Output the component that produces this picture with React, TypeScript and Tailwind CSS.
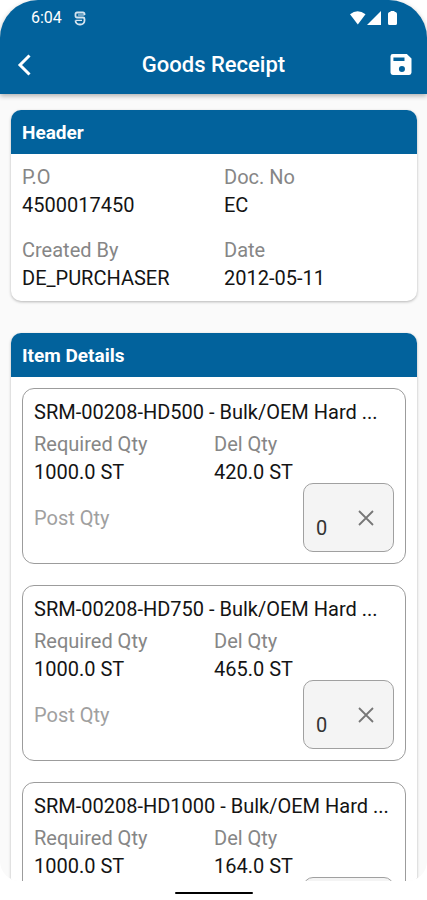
import React, { useState } from "react";

type FieldProps = { label: string; value: string };

function Field({ label, value }: FieldProps) {
  return (
    <div className="flex flex-col gap-1.5">
      <dt className="text-[#868686]">{label}</dt>
      <dd className="text-[#141414]">{value}</dd>
    </div>
  );
}

type CardProps = { title: string; className: string; children: React.ReactNode };

function Card({ title, className, children }: CardProps) {
  return (
    <section className="overflow-hidden rounded-[10px] bg-white shadow-[0_1px_3px_rgba(0,0,0,0.28)]">
      <h2 className="bg-[#02629c] px-[11px] pt-3 pb-2.5 text-[19px] font-bold text-white">{title}</h2>
      <div className={className}>{children}</div>
    </section>
  );
}

type Item = { id: string; title: string; required: string; delivered: string };

const items: Item[] = [
  { id: "hd500", title: "SRM-00208-HD500 - Bulk/OEM Hard ...", required: "1000.0 ST", delivered: "420.0 ST" },
  { id: "hd750", title: "SRM-00208-HD750 - Bulk/OEM Hard ...", required: "1000.0 ST", delivered: "465.0 ST" },
  { id: "hd1000", title: "SRM-00208-HD1000 - Bulk/OEM Hard ...", required: "1000.0 ST", delivered: "164.0 ST" },
];

function ItemCard({ item }: { item: Item }) {
  const [qty, setQty] = useState("0");
  return (
    <li className="rounded-xl border border-[#9c9c9c] px-[11px] pt-3 pb-[11px]">
      <h3 className="truncate text-[#141414]">{item.title}</h3>
      <dl className="mt-2.5 grid grid-cols-2">
        <Field label="Required Qty" value={item.required} />
        <Field label="Del Qty" value={item.delivered} />
      </dl>
      <div className="flex items-center justify-between">
        <label htmlFor={item.id} className="text-[#a0a0a0]">
          Post Qty
        </label>
        <div className="flex h-[69px] w-[91px] rounded-[10px] border border-[#a0a0a0] bg-[#f4f4f4]">
          <input
            id={item.id}
            inputMode="numeric"
            value={qty}
            onChange={(e) => setQty(e.target.value)}
            className="w-12 bg-transparent pt-5 pl-3 text-[#333333] outline-none"
          />
          <button type="button" aria-label="Clear" onClick={() => setQty("")} className="flex items-center">
            <svg viewBox="0 0 28 28" className="size-7" fill="none" stroke="#777777" strokeWidth="1.8">
              <path d="M7 7l14 14M21 7L7 21" />
            </svg>
          </button>
        </div>
      </div>
    </li>
  );
}

function StatusBar() {
  return (
    <div className="flex h-9 items-center justify-between pr-7 pl-[31px] text-base">
      <div className="flex items-center gap-3">
        <span>6:04</span>
        <svg viewBox="0 0 12 15" className="h-[15px] w-3" fill="none" stroke="#d5e4ef">
          <path d="M10.500 4V3a1.500 1.500 0 0 0-1.500-1.500H3A1.500 1.500 0 0 0 1.500 3v2A1.500 1.500 0 0 0 3 6.500h6A1.500 1.500 0 0 1 10.500 8v1.500a4 4 0 0 1-4 4h-1a4 4 0 0 1-4-4" strokeWidth="1.8" />
          <path d="M4 4h6.500M1.500 9.300H8" strokeWidth="1.200" />
        </svg>
      </div>
      <svg viewBox="0 0 50 16" className="h-4 w-[50px]" fill="#ffffff">
        <path d="M1 4.200Q8.500-1.800 16.500 4.200L8.800 14.500Z" />
        <path d="M32 1v14H18Z" />
        <path d="M41.500 1h4v1h1a2 2 0 0 1 1.500 2v9.500a1.500 1.500 0 0 1-1.500 1.500h-6a1.500 1.500 0 0 1-1.500-1.500V4a2 2 0 0 1 1.500-2h1Z" />
      </svg>
    </div>
  );
}

export default function App() {
  return (
    <div className="flex h-screen flex-col overflow-hidden bg-white font-['Roboto',sans-serif] text-xl leading-[22px]">
      <header className="z-10 shrink-0 rounded-t-[38px] bg-[#02629c] text-white shadow-[0_2px_5px_rgba(0,0,0,0.3)]">
        <StatusBar />
        <div className="flex h-[58px] items-center justify-between px-3">
          <button type="button" aria-label="Back" className="flex">
            <svg viewBox="0 0 28 28" className="size-7" fill="none" stroke="#ffffff" strokeWidth="3">
              <path d="M17.500 4.500L8 14l9.500 9.500" />
            </svg>
          </button>
          <h1 className="text-[22px] font-medium">Goods Receipt</h1>
          <button type="button" aria-label="Save" className="flex">
            <svg viewBox="0 0 24 24" className="size-7" fill="#ffffff">
              <path
                fillRule="evenodd"
                d="M17 2.500H5a2 2 0 0 0-2 2v14a2 2 0 0 0 2 2h14a2 2 0 0 0 2-2V6.500l-4-4zM12.800 18a2.600 2.600 0 1 1 0-5.200 2.600 2.600 0 0 1 0 5.200zM15 8.500H5.500V5.500H15z"
              />
            </svg>
          </button>
        </div>
      </header>
      <main className="flex min-h-0 flex-1 flex-col gap-8 overflow-hidden rounded-b-[20px] bg-[#fafafa] pt-4 pr-2.5 pl-[11px] *:shrink-0">
        <Card title="Header" className="px-[11px] py-3">
          <dl className="grid grid-cols-2 gap-x-5 gap-y-[23px]">
            <Field label="P.O" value="4500017450" />
            <Field label="Doc. No" value="EC" />
            <Field label="Created By" value="DE_PURCHASER" />
            <Field label="Date" value="2012-05-11" />
          </dl>
        </Card>
        <Card title="Item Details" className="px-[11px] py-[11px]">
          <ul className="flex flex-col gap-[21px]">
            {items.map((item) => (
              <ItemCard key={item.id} item={item} />
            ))}
          </ul>
        </Card>
      </main>
      <footer className="flex h-[19px] shrink-0 items-center justify-center bg-white pt-1">
        <div className="h-0.5 w-[78px] rounded-full bg-black" />
      </footer>
    </div>
  );
}
